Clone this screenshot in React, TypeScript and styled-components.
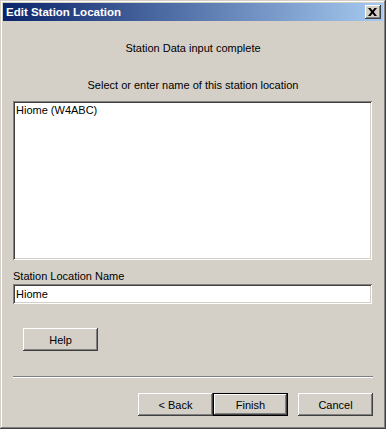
import React from 'react';
import styled, { createGlobalStyle } from 'styled-components';

const GlobalStyle = createGlobalStyle`
  html, body {
    margin: 0;
    padding: 0;
    background: #d4d0c8;
  }
  body {
    font-family: 'Liberation Sans', Arial, sans-serif;
    font-size: 11px;
    color: #000;
  }
`;

const Window = styled.div`
  width: 386px;
  height: 429px;
  box-sizing: border-box;
  padding: 3px;
  background: #d4d0c8;
  box-shadow: inset -1px -1px #404040, inset 1px 1px #d4d0c8,
    inset -2px -2px #808080, inset 2px 2px #ffffff;
  display: flex;
  flex-direction: column;
`;

const TitleBar = styled.div`
  height: 18px;
  background: linear-gradient(to right, #0a246a, #a6caf0);
  display: flex;
  align-items: center;
  justify-content: space-between;
  padding: 0 2px 0 3px;
`;

const Title = styled.span`
  color: #fff;
  font-weight: bold;
  font-family: 'Liberation Sans', Arial, sans-serif;
  font-size: 11.5px;
`;

const CloseButton = styled.div`
  width: 16px;
  height: 14px;
  box-sizing: border-box;
  background: #d4d0c8;
  box-shadow: inset -1px -1px #404040, inset 1px 1px #ffffff,
    inset -2px -2px #808080;
  display: flex;
  align-items: center;
  justify-content: center;
  padding-right: 1px;
`;

const Content = styled.div`
  flex: 1;
  display: flex;
  flex-direction: column;
  padding: 0 10px;
`;

const Caption = styled.div<{ $top: number }>`
  text-align: center;
  line-height: 13px;
  margin-top: ${({ $top }) => $top}px;
`;

const Sunken = styled.div`
  box-sizing: border-box;
  background: #fff;
  box-shadow: inset 1px 1px #808080, inset -1px -1px #ffffff,
    inset 2px 2px #404040, inset -2px -2px #d4d0c8;
  padding: 3px 3px;
`;

const ListBox = styled(Sunken)`
  margin-top: 9px;
  width: 359px;
  height: 159px;
  line-height: 13px;
`;

const Label = styled.div`
  margin-top: 10px;
  line-height: 13px;
`;

const TextBox = styled(Sunken)`
  margin-top: 1px;
  width: 359px;
  height: 20px;
  line-height: 14px;
`;

const Button = styled.div<{ $default?: boolean }>`
  width: 75px;
  height: 23px;
  box-sizing: border-box;
  background: #d4d0c8;
  display: flex;
  align-items: center;
  justify-content: center;
  box-shadow: ${({ $default }) =>
    $default
      ? 'inset 0 0 0 1px #000, inset -2px -2px #404040, inset 2px 2px #ffffff, inset -3px -3px #808080'
      : 'inset -1px -1px #404040, inset 1px 1px #ffffff, inset -2px -2px #808080'};
`;

const HelpRow = styled.div`
  margin-top: 24px;
  padding-left: 10px;
`;

const Separator = styled.div`
  margin-top: 25px;
  height: 2px;
  border-top: 1px solid #808080;
  border-bottom: 1px solid #ffffff;
  box-sizing: border-box;
`;

const ButtonRow = styled.div`
  margin-top: 15px;
  display: flex;
  justify-content: flex-end;
`;

const Spacer = styled.div<{ $w: number }>`
  width: ${({ $w }) => $w}px;
`;

export default function App() {
  return (
    <>
      <GlobalStyle />
      <Window>
        <TitleBar>
          <Title>Edit Station Location</Title>
          <CloseButton>
            <svg width="9" height="8" viewBox="0 0 9 8">
              <path d="M0 0h2.5L4.5 2.5 6.5 0H9L5.8 4 9 8H6.5L4.5 5.5 2.5 8H0l3.2-4z" fill="#000" />
            </svg>
          </CloseButton>
        </TitleBar>
        <Content>
          <Caption $top={21}>Station Data input complete</Caption>
          <Caption $top={24}>Select or enter name of this station location</Caption>
          <ListBox>Hiome (W4ABC)</ListBox>
          <Label>Station Location Name</Label>
          <TextBox>Hiome</TextBox>
          <HelpRow>
            <Button>Help</Button>
          </HelpRow>
          <Separator />
          <ButtonRow>
            <Button>&lt; Back</Button>
            <Button $default>Finish</Button>
            <Spacer $w={10} />
            <Button>Cancel</Button>
          </ButtonRow>
        </Content>
      </Window>
    </>
  );
}
